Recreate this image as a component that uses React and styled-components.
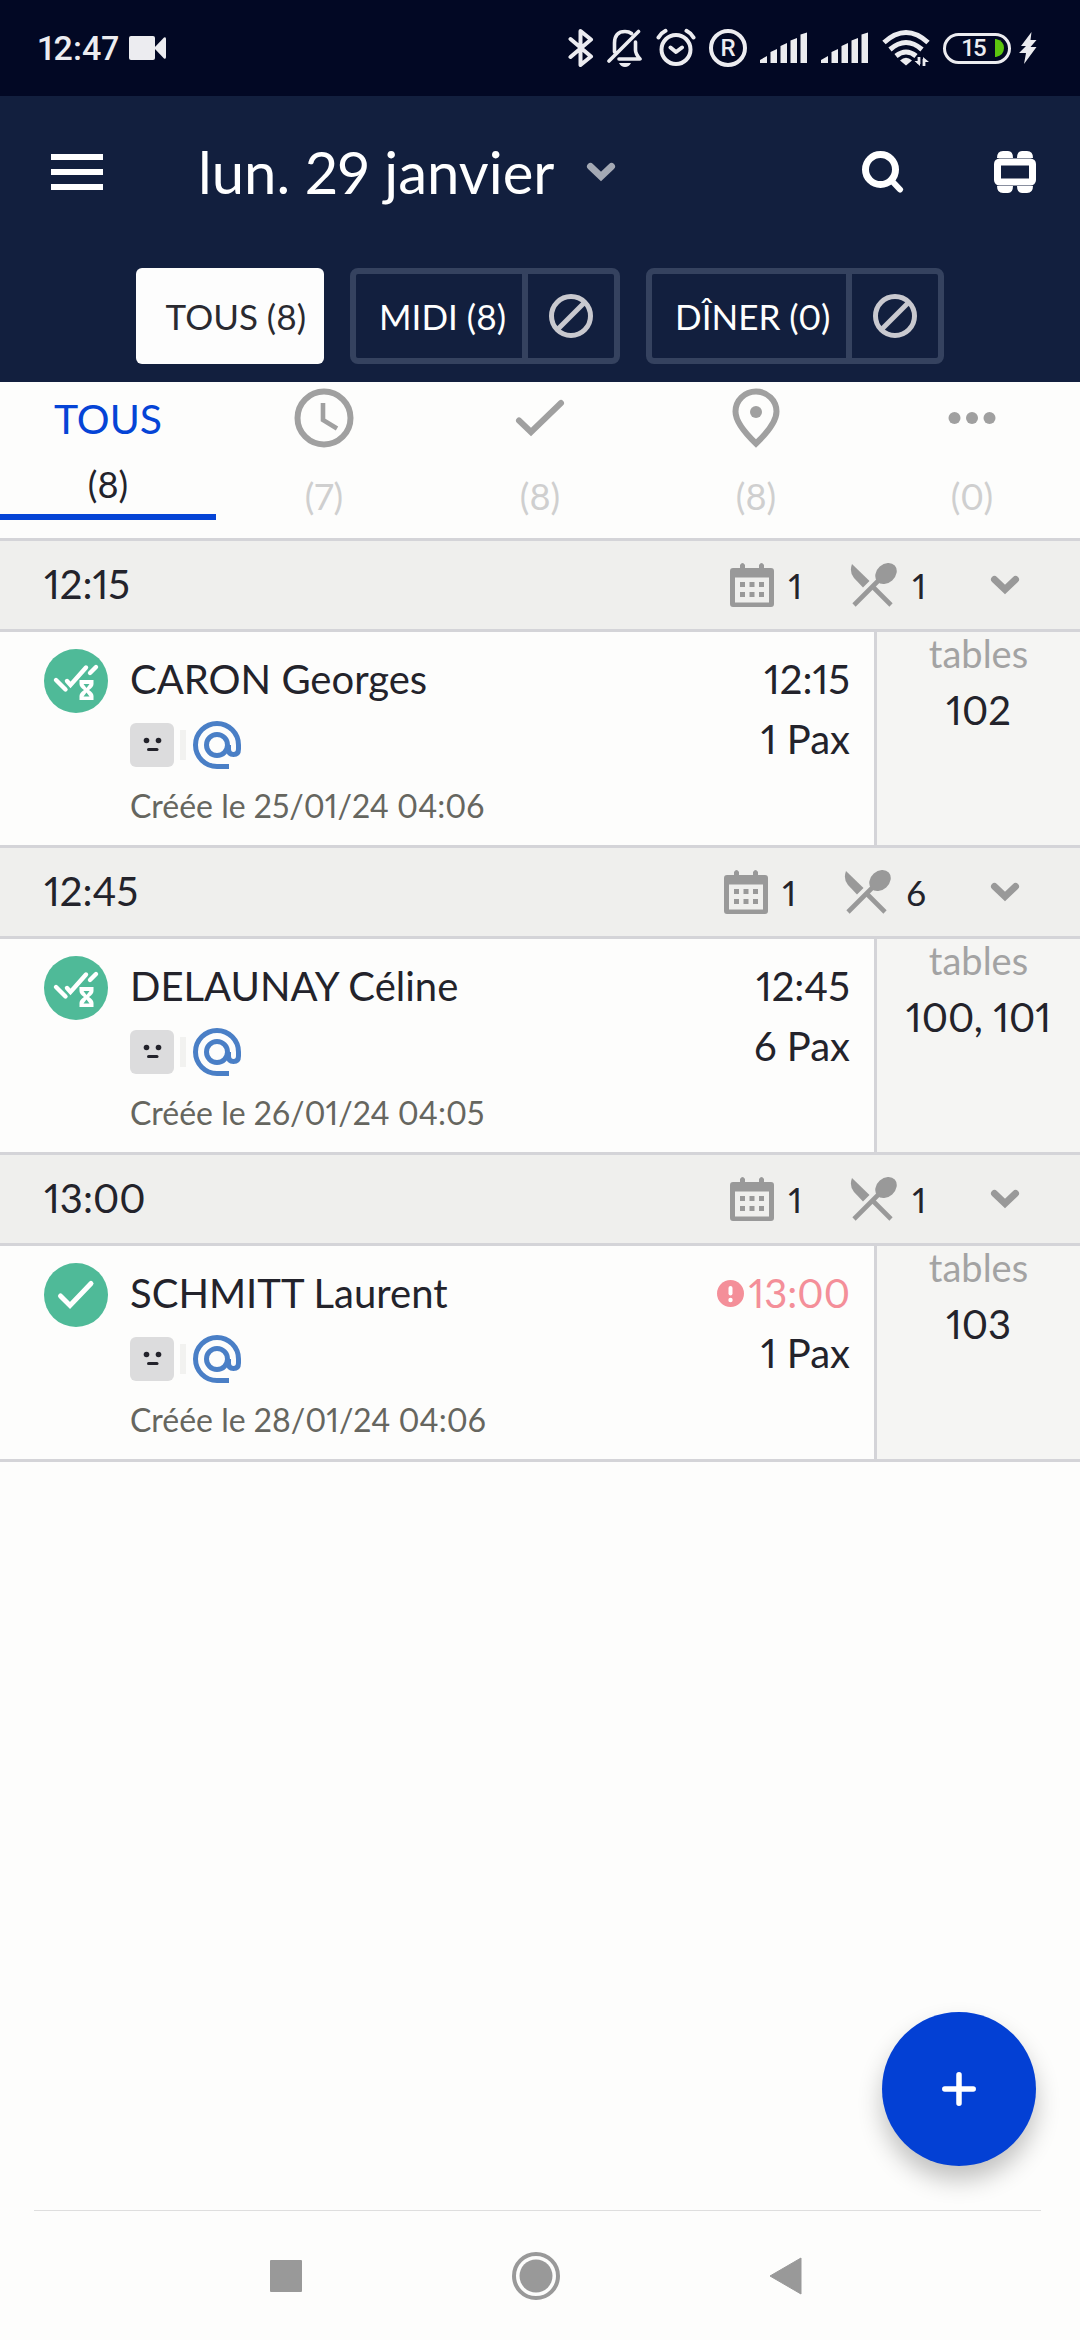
import React, { useState } from "react";
import styled, { createGlobalStyle } from "styled-components";

const slots = [
  {
    time: "12:15",
    bookings: 1,
    guests: 1,
    reservations: [
      { name: "CARON Georges", time: "12:15", pax: 1, created: "25/01/24 04:06", tables: "102", status: "waiting" },
    ],
  },
  {
    time: "12:45",
    bookings: 1,
    guests: 6,
    reservations: [
      { name: "DELAUNAY Céline", time: "12:45", pax: 6, created: "26/01/24 04:05", tables: "100, 101", status: "waiting" },
    ],
  },
  {
    time: "13:00",
    bookings: 1,
    guests: 1,
    reservations: [
      { name: "SCHMITT Laurent", time: "13:00", pax: 1, created: "28/01/24 04:06", tables: "103", status: "confirmed", late: true },
    ],
  },
];

function App() {
  const [service, setService] = useState("TOUS");
  const [tab, setTab] = useState("all");

  const tabs = [
    { id: "all", title: "Tous", count: 8 },
    { id: "pending", title: "À venir", count: 7, icon: <ClockIcon /> },
    { id: "confirmed", title: "Confirmées", count: 8, icon: <CheckIcon /> },
    { id: "placed", title: "Placées", count: 8, icon: <PinIcon /> },
    { id: "other", title: "Autres", count: 0, icon: <DotsIcon /> },
  ];

  return (
    <Page>
      <GlobalStyle />
      <StatusBar>
        <Clock>12:47</Clock>
        <CameraIcon />
        <StatusIcons>
          <BluetoothIcon />
          <BellOffIcon />
          <AlarmIcon />
          <Roaming>R</Roaming>
          <SignalIcon />
          <SignalIcon />
          <WifiIcon />
          <Charge>
            <Battery>
              15
              <BatteryLevel viewBox="0 0 9 18"><path d="M0 0 H1 Q9 2 9 9 Q9 16 1 18 H0 Z" /></BatteryLevel>
            </Battery>
            <BoltIcon />
          </Charge>
        </StatusIcons>
      </StatusBar>

      <Header>
        <TitleRow>
          <IconButton aria-label="Menu"><MenuIcon /></IconButton>
          <DateButton>
            lun. 29 janvier
            <ChevronIcon color="#a4a9b4" />
          </DateButton>
          <HeaderActions>
            <IconButton aria-label="Rechercher"><SearchIcon /></IconButton>
            <IconButton aria-label="Plan de salle"><TableIcon /></IconButton>
          </HeaderActions>
        </TitleRow>
        <Services>
          <AllServices onClick={() => setService("TOUS")} aria-pressed={service === "TOUS"}>TOUS (8)</AllServices>
          <Service>
            <ServiceName onClick={() => setService("MIDI")}>MIDI (8)</ServiceName>
            <ServiceBlock aria-label="Bloquer le midi"><BlockIcon /></ServiceBlock>
          </Service>
          <Service>
            <ServiceName onClick={() => setService("DINER")}>DÎNER (0)</ServiceName>
            <ServiceBlock aria-label="Bloquer le dîner"><BlockIcon /></ServiceBlock>
          </Service>
        </Services>
      </Header>

      <Tabs>
        {tabs.map((t) => (
          <Tab key={t.id} $active={tab === t.id} aria-label={t.title} onClick={() => setTab(t.id)}>
            {t.icon ? t.icon : <TabTitle>TOUS</TabTitle>}
            <TabCount $muted={!!t.icon}>({t.count})</TabCount>
          </Tab>
        ))}
      </Tabs>

      <main>
        {slots.map((slot) => (
          <Slot key={slot.time} slot={slot} />
        ))}
      </main>

      <AddButton aria-label="Ajouter">
        <svg width="34" height="34" viewBox="0 0 34 34" fill="none" stroke="#fff" strokeWidth="5.5" strokeLinecap="round">
          <path d="M17 2.8 V31.2 M2.8 17 H31.2" />
        </svg>
      </AddButton>

      <NavBar>
        <IconButton aria-label="Applications">
          <svg width="48" height="48" viewBox="0 0 48 48"><rect x="8" y="8" width="32" height="32" rx="1" fill="#999" /></svg>
        </IconButton>
        <IconButton aria-label="Accueil">
          <svg width="48" height="48" viewBox="0 0 48 48">
            <circle cx="24" cy="24" r="22" fill="none" stroke="#999" strokeWidth="4" />
            <circle cx="24" cy="24" r="16.5" fill="#999" />
          </svg>
        </IconButton>
        <IconButton aria-label="Retour">
          <svg width="48" height="48" viewBox="0 0 48 48"><path d="M8 24 L39 6 V42 Z" fill="#999" stroke="#999" strokeLinejoin="round" /></svg>
        </IconButton>
      </NavBar>
    </Page>
  );
}

function Slot({ slot }) {
  const [open, setOpen] = useState(true);

  return (
    <section>
      <SlotHeader>
        <SlotTime>{slot.time}</SlotTime>
        <SlotStat>
          <CalendarIcon />
          {slot.bookings}
        </SlotStat>
        <SlotStat>
          <UtensilsIcon />
          {slot.guests}
        </SlotStat>
        <SlotToggle aria-label="Replier" onClick={() => setOpen(!open)}>
          <ChevronIcon color="#999" />
        </SlotToggle>
      </SlotHeader>
      {open && slot.reservations.map((r) => (
        <Reservation key={r.name}>
          <Summary>
            {r.status === "waiting" ? <WaitingBadge /> : <ConfirmedBadge />}
            <Guest>
              <MainText>{r.name}</MainText>
              <Tags>
                <FaceIcon />
                <TagSeparator />
                <AtIcon />
              </Tags>
              <Created>Créée le {r.created}</Created>
            </Guest>
            <Timing>
              <MainText $late={r.late}>
                {r.late && <LateIcon />}
                {r.time}
              </MainText>
              <MainText>{r.pax} Pax</MainText>
            </Timing>
          </Summary>
          <TablesCell>
            <TablesLabel>tables</TablesLabel>
            <MainText>{r.tables}</MainText>
          </TablesCell>
        </Reservation>
      ))}
    </section>
  );
}

/* icons */

const CameraIcon = () => (
  <svg width="37" height="24" viewBox="0 0 37 24" fill="#ececf0">
    <rect width="26" height="24" rx="2" />
    <path d="M25 12 L35 1.5 Q37 0.5 37 3 V21 Q37 23.5 35 22.5 Z" />
  </svg>
);

const BluetoothIcon = () => (
  <svg width="26" height="40" viewBox="0 0 26 40" fill="none" stroke="#ececf0" strokeWidth="4" strokeLinejoin="round" strokeLinecap="round">
    <path d="M2.5 11 L23 28.5 L12.5 37 V3 L23 11.5 L2.5 29" />
  </svg>
);

const BellOffIcon = () => (
  <svg width="36" height="40" viewBox="0 0 36 40" fill="none" stroke="#ececf0" strokeWidth="3.6" strokeLinecap="round" strokeLinejoin="round">
    <path d="M7.5 24 V15 Q7.5 3.5 18 3.5 Q22 3.5 24.500 5.500 M28.500 14 V22 Q28.500 26 33 31 H12 M2 33 L31.500 3.500" />
    <path d="M12 35 H24 Q22 39 18 39 Q14 39 12 35 Z" fill="#ececf0" stroke="none" />
  </svg>
);

const AlarmIcon = () => (
  <svg width="40" height="40" viewBox="0 0 40 40" fill="none" stroke="#ececf0" strokeWidth="4" strokeLinecap="round" strokeLinejoin="round">
    <circle cx="20" cy="21.5" r="14.5" />
    <path d="M14.5 19.5 L20 24 L26 19.5 M2.5 9.500 Q5 5 9.500 2.800 M37.500 9.500 Q35 5 30.500 2.800" />
  </svg>
);

const SignalIcon = () => (
  <svg width="48" height="32" viewBox="0 0 48 32" fill="#ececf0">
    <path d="M0 31 V28 L7 24 V31 Z M10.500 31 V20 L17 17 V31 Z M20.500 31 V14 L27 11 V31 Z M30.500 31 V8.500 L37 6 V31 Z M40.500 31 V2.500 L47 0.500 V31 Z" />
  </svg>
);

const WifiIcon = () => (
  <svg width="48" height="38" viewBox="0 0 48 38" fill="none" stroke="#ececf0" strokeWidth="5">
    <path d="M2 13.500 Q24 -6.500 46 13.500 M8 20.500 Q24 6.500 40 20.500 M14 27 Q24 19 34 27" />
    <path d="M18 31.500 Q24 26 30 31.500 L24 36.500 Z" fill="#ececf0" stroke="none" />
    <path d="M37 28 V35 M42 30 V37" strokeWidth="2.8" />
    <path d="M32.500 32 H38 V37 Z M47 33 H41 V28 Z" fill="#ececf0" stroke="none" />
  </svg>
);

const BoltIcon = () => (
  <svg width="18" height="32" viewBox="0 0 18 32" fill="#ececf0">
    <path d="M12.500 0 L2 14 H7 L0 21 H7 L5 32 L17.500 15 H11.500 L17.500 8 H11.500 Z" />
  </svg>
);

const MenuIcon = () => (
  <svg width="52" height="36" viewBox="0 0 52 36" fill="#fff">
    <path d="M0 0 H52 V6 H0 Z M0 15 H52 V21 H0 Z M0 30 H52 V36 H0 Z" />
  </svg>
);

const ChevronIcon = ({ color }) => (
  <svg width="30" height="20" viewBox="0 0 30 20" fill="none" stroke={color} strokeWidth="7" strokeLinecap="round">
    <path d="M4.500 4.500 L15 14.500 L25.500 4.500" />
  </svg>
);

const SearchIcon = () => (
  <svg width="42" height="42" viewBox="0 0 42 42" fill="none" stroke="#fff" strokeWidth="7">
    <circle cx="18.5" cy="18.5" r="15" />
    <path d="M29 29 L38 38.500" strokeLinecap="round" strokeWidth="6" />
  </svg>
);

const TableIcon = () => (
  <svg width="42" height="42" viewBox="0 0 42 42" fill="none">
    <path fill="#fff" d="M3 7 Q3 0 9 0 H14 Q19 0 19 7 Z M23 7 Q23 0 28 0 H33 Q39 0 39 7 Z M3 35 Q3 42 9 42 H14 Q19 42 19 35 Z M23 35 Q23 42 28 42 H33 Q39 42 39 35 Z" />
    <rect x="3.5" y="11" width="35" height="20" rx="2" stroke="#fff" strokeWidth="7" />
  </svg>
);

const BlockIcon = () => (
  <svg width="44" height="44" viewBox="0 0 44 44" fill="none" stroke="#c9c9cf" strokeWidth="5">
    <circle cx="22" cy="22" r="19.5" />
    <path d="M8.500 35.500 L35.500 8.500" />
  </svg>
);

const ClockIcon = () => (
  <svg width="60" height="60" viewBox="0 0 60 60" fill="none" stroke="#a0a0a0" strokeWidth="6">
    <circle cx="30" cy="30" r="26.5" />
    <path d="M29 15 V32 L43 40.500" strokeWidth="4.6" />
  </svg>
);

const CheckIcon = () => (
  <svg width="60" height="60" viewBox="0 0 60 60" fill="none" stroke="#a0a0a0" strokeWidth="6" strokeLinecap="round">
    <path d="M9 32.500 L21 44 L51 15" />
  </svg>
);

const PinIcon = () => (
  <svg width="60" height="60" viewBox="0 0 60 60" fill="none" stroke="#a0a0a0" strokeWidth="6">
    <path d="M30 55.500 Q9.500 36 9.500 23.500 A20.500 20 0 0 1 50.500 23.500 Q50.500 36 30 55.500 Z" />
    <circle cx="30" cy="24" r="6" fill="#a0a0a0" stroke="none" />
  </svg>
);

const DotsIcon = () => (
  <svg width="60" height="60" viewBox="0 0 60 60" fill="#a0a0a0">
    <circle cx="12.5" cy="30" r="6" />
    <circle cx="30" cy="30" r="6" />
    <circle cx="47.5" cy="30" r="6" />
  </svg>
);

const CalendarIcon = () => (
  <svg width="44" height="44" viewBox="0 0 44 44" fill="#999">
    <path fillRule="evenodd" d="M10 5 V2 Q12.500 -2 15 2 V5 H29 V2 Q31.500 -2 34 2 V5 H41 Q44 5 44 8 V41 Q44 44 41 44 H3 Q0 44 0 41 V8 Q0 5 3 5 Z M5 14.500 V39.500 H39 V14.500 Z" />
    <path d="M10 19 h5 v5 h-5 Z M19.500 19 h5 v5 h-5 Z M29 19 h5 v5 h-5 Z M10 29 h5 v5 h-5 Z M19.500 29 h5 v5 h-5 Z M29 29 h5 v5 h-5 Z" />
  </svg>
);

const UtensilsIcon = () => (
  <svg width="48" height="44" viewBox="0 0 48 44" fill="#999">
    <path d="M2 1 L19.500 18 L13 24.500 L4 15 Q-1 9 2 1 Z" />
    <path d="M4 42 L29 17" stroke="#999" strokeWidth="4.6" />
    <path d="M23 24 L41 42" stroke="#999" strokeWidth="4.6" />
    <ellipse cx="36" cy="10.5" rx="11.8" ry="9.3" transform="rotate(-42 36 10.5)" />
  </svg>
);

const WaitingBadge = () => (
  <Badge viewBox="0 0 64 64">
    <circle cx="32" cy="32" r="32" fill="#4fba98" />
    <path d="M12 31 L21.500 40.500 M23 32 L26.500 36 L42 18.500 M46 24 L52 18" fill="none" stroke="#fff" strokeWidth="4.4" strokeLinecap="round" />
    <path fill="#fff" d="M35.500 31 H49.500 V35 Q49.500 38 45 41 Q49.500 44 49.500 47 V51 H35.500 V47 Q35.500 44 40 41 Q35.500 38 35.500 35 Z" />
    <path fill="#4fba98" d="M39.500 35 H45.500 L42.500 39 Z M42.500 43.500 L45.500 47.500 H39.500 Z" />
  </Badge>
);

const ConfirmedBadge = () => (
  <Badge viewBox="0 0 64 64">
    <circle cx="32" cy="32" r="32" fill="#4fba98" />
    <path d="M16.500 33 L26 42.500 L47 20.500" fill="none" stroke="#fff" strokeWidth="5" strokeLinecap="round" />
  </Badge>
);

const FaceIcon = () => (
  <svg width="44" height="44" viewBox="0 0 44 44" fill="#23232b">
    <rect width="44" height="44" rx="6" fill="#dcdcdd" />
    <circle cx="16.5" cy="17.5" r="2.8" />
    <circle cx="28.5" cy="17.5" r="2.8" />
    <rect x="17" y="25" width="11.5" height="3" rx="1.5" />
  </svg>
);

const AtIcon = () => (
  <svg width="50" height="50" viewBox="0 0 50 50" fill="none" stroke="#4a7fc6" strokeWidth="5">
    <path d="M37 46.500 H25 A21.500 21.500 0 1 1 46.500 25 V29 Q46.500 34.500 41.500 34.500 Q36.500 34.500 36.500 29 V25" />
    <circle cx="25" cy="25" r="10.5" />
  </svg>
);

const LateIcon = () => (
  <svg width="27" height="27" viewBox="0 0 27 27" aria-label="En retard">
    <circle cx="13.5" cy="13.5" r="13.5" fill="#f48f99" />
    <path d="M13.500 8 V13.500" stroke="#fff" strokeWidth="4" strokeLinecap="round" />
    <circle cx="13.5" cy="20" r="2.2" fill="#fff" />
  </svg>
);

/* layout */

const GlobalStyle = createGlobalStyle`
  * {
    box-sizing: border-box;
  }

  body {
    margin: 0;
    background: #fdfdfc;
    color: #23232b;
    font-family: Lato, "Liberation Sans", sans-serif;
    font-variant-numeric: proportional-nums;
  }

  button {
    padding: 0;
    border: none;
    background: none;
    color: inherit;
    font: inherit;
    font-variant-numeric: inherit;
    cursor: pointer;
  }

  svg {
    display: block;
    flex-shrink: 0;
  }
`;

const Page = styled.div`
  min-height: 100vh;
  display: flex;
  flex-direction: column;
`;

const StatusBar = styled.div`
  height: 96px;
  padding: 0 43px 0 38px;
  display: flex;
  align-items: center;
  gap: 10px;
  background: #020824;
  color: #ececf0;
  font-family: Roboto, sans-serif;
  font-weight: 500;
`;

const Clock = styled.span`
  font-size: 34px;
`;

const StatusIcons = styled.div`
  margin-left: auto;
  display: flex;
  align-items: center;
  gap: 13px;
`;

const Roaming = styled.span`
  width: 38px;
  height: 38px;
  border: 4px solid #ececf0;
  border-radius: 50%;
  display: flex;
  align-items: center;
  justify-content: center;
  font-size: 24px;
`;

const Charge = styled.div`
  display: flex;
  align-items: center;
  gap: 8px;
`;

const Battery = styled.div`
  width: 68px;
  height: 31px;
  padding: 0 4px 0 16px;
  border: 3px solid #ececf0;
  border-radius: 16px;
  display: flex;
  align-items: center;
  justify-content: space-between;
  font-size: 24px;
`;

const BatteryLevel = styled.svg`
  width: 9px;
  height: 18px;
  fill: #5cc50f;
`;

const Header = styled.header`
  height: 286px;
  padding-bottom: 18px;
  display: flex;
  flex-direction: column;
  justify-content: space-between;
  background: #121f3e;
  color: #fff;
`;

const TitleRow = styled.div`
  height: 152px;
  padding: 0 44px 0 51px;
  display: flex;
  align-items: center;
`;

const IconButton = styled.button`
  display: flex;
  align-items: center;
`;

const DateButton = styled.button`
  margin-left: 95px;
  display: flex;
  align-items: center;
  gap: 32px;
  font-size: 58px;
  line-height: 70px;
`;

const HeaderActions = styled.div`
  margin-left: auto;
  display: flex;
  gap: 90px;
`;

const Services = styled.div`
  display: flex;
  justify-content: center;
  gap: 26px;
  font-size: 35px;
`;

const AllServices = styled.button`
  height: 96px;
  padding: 0 18px 0 30px;
  border-radius: 6px;
  background: #fdfdfd;
  color: #2a2a30;
`;

const Service = styled.div`
  height: 96px;
  border: 6px solid #35425f;
  border-radius: 8px;
  display: flex;
`;

const ServiceName = styled.button`
  padding: 0 16px 0 23px;
`;

const ServiceBlock = styled.button`
  width: 92px;
  border-left: 6px solid #35425f;
  display: flex;
  align-items: center;
  justify-content: center;
`;

const Tabs = styled.nav`
  height: 156px;
  display: grid;
  grid-template-columns: repeat(5, 1fr);
  align-items: start;
`;

const Tab = styled.button`
  height: 138px;
  padding-top: 6px;
  border-bottom: 6px solid ${(props) => (props.$active ? "#0544d6" : "transparent")};
  display: flex;
  flex-direction: column;
  align-items: center;
`;

const TabTitle = styled.span`
  color: #0544d6;
  font-size: 41px;
  line-height: 62px;
`;

const TabCount = styled.span`
  margin-top: ${(props) => (props.$muted ? "26px" : "12px")};
  color: ${(props) => (props.$muted ? "#cfcfcf" : "#23232b")};
  font-size: 36px;
  line-height: 44px;
`;

const SlotHeader = styled.div`
  height: 94px;
  margin-bottom: -3px;
  padding: 0 60px 0 44px;
  border-top: 3px solid #d4d4d8;
  border-bottom: 3px solid #d4d4d8;
  display: flex;
  align-items: center;
  background: #efefed;
`;

const SlotTime = styled.h2`
  margin: 0 auto 0 0;
  padding-bottom: 2px;
  font-size: 40px;
  font-weight: 400;
`;

const SlotStat = styled.span`
  margin-right: 48px;
  display: flex;
  align-items: center;
  gap: 14px;
  font-size: 35px;
`;

const SlotToggle = styled.button`
  margin-left: 16px;
`;

const Reservation = styled.article`
  min-height: 219px;
  margin-bottom: -3px;
  border-top: 3px solid #d4d4d8;
  border-bottom: 3px solid #d4d4d8;
  display: flex;
`;

const Summary = styled.div`
  flex: 1;
  padding: 17px 24px 0 44px;
  display: flex;
  align-items: flex-start;
  gap: 22px;
`;

const Badge = styled.svg`
  width: 64px;
  height: 64px;
`;

const Guest = styled.div`
  flex: 1;
`;

const MainText = styled.div`
  display: flex;
  align-items: center;
  justify-content: flex-end;
  gap: 4px;
  color: ${(props) => (props.$late ? "#f48f99" : "inherit")};
  font-size: 40px;
  line-height: 60px;
  white-space: nowrap;

  ${Guest} & {
    justify-content: flex-start;
  }
`;

const Tags = styled.div`
  height: 72px;
  display: flex;
  align-items: center;
  gap: 6px;
`;

const TagSeparator = styled.span`
  width: 6px;
  height: 30px;
  background: #f2f2f0;
`;

const Created = styled.div`
  color: #66665f;
  font-size: 32px;
  line-height: 50px;
`;

const Timing = styled.div`
  text-align: right;
`;

const TablesCell = styled.div`
  width: 206px;
  border-left: 3px solid #d4d4d8;
  display: flex;
  flex-direction: column;
  align-items: center;
  gap: 6px;
  background: #f5f5f3;
`;

const TablesLabel = styled.div`
  color: #a3a3a3;
  font-size: 38px;
  line-height: 42px;
`;

const AddButton = styled.button`
  position: fixed;
  right: 44px;
  bottom: 174px;
  width: 154px;
  height: 154px;
  border-radius: 50%;
  display: flex;
  align-items: center;
  justify-content: center;
  background: #0340d4;
  box-shadow: 0 14px 24px rgba(0, 0, 0, 0.24);
`;

const NavBar = styled.nav`
  height: 130px;
  margin: auto 39px 0 34px;
  padding-right: 4px;
  border-top: 1px solid #dedede;
  display: flex;
  align-items: center;
  justify-content: center;
  gap: 202px;
`;

export default App;
